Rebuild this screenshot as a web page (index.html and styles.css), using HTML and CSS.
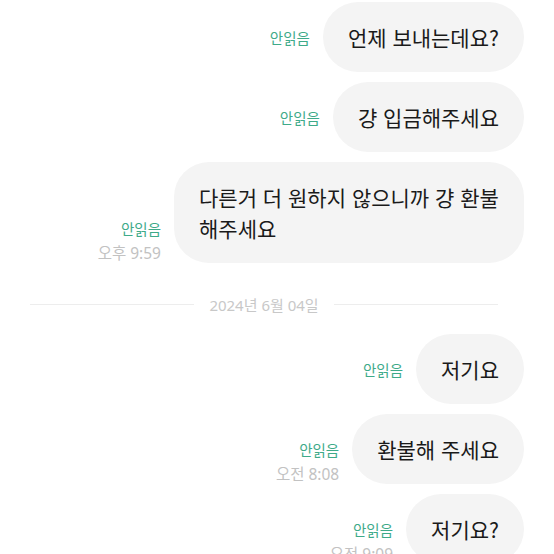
FILE: index.html
```html
<!DOCTYPE html>
<html lang="ko">
<head>
    <meta charset="utf-8">
    <title>채팅</title>
    <link rel="stylesheet" href="styles.css">
</head>
<body>

    <!-- Chat messages -->
    <div class="chat">
        <div class="row">
            <div class="meta">
                <span class="unread">안읽음</span>
                <span class="time hidden">오후 9:59</span>
            </div>
            <div class="bubble">언제 보내는데요?</div>
        </div>

        <div class="row">
            <div class="meta">
                <span class="unread">안읽음</span>
                <span class="time hidden">오후 9:59</span>
            </div>
            <div class="bubble">걍 입금해주세요</div>
        </div>

        <div class="row">
            <div class="meta">
                <span class="unread">안읽음</span>
                <span class="time">오후 9:59</span>
            </div>
            <div class="bubble">다른거 더 원하지 않으니까 걍 환불 해주세요</div>
        </div>

        <!-- Date divider -->
        <div class="divider">
            <span class="line"></span>
            <span class="date">2024년 6월 04일</span>
            <span class="line"></span>
        </div>

        <div class="row">
            <div class="meta">
                <span class="unread">안읽음</span>
                <span class="time hidden">오전 8:08</span>
            </div>
            <div class="bubble">저기요</div>
        </div>

        <div class="row">
            <div class="meta">
                <span class="unread">안읽음</span>
                <span class="time">오전 8:08</span>
            </div>
            <div class="bubble">환불해 주세요</div>
        </div>

        <div class="row">
            <div class="meta">
                <span class="unread">안읽음</span>
                <span class="time">오전 9:09</span>
            </div>
            <div class="bubble">저기요?</div>
        </div>
    </div>

</body>
</html>
```

FILE: styles.css
```css
body {
    margin: 0;
    background-color: #fff;
    font-family: "Noto Sans", "Noto Sans CJK KR", sans-serif;
    overflow: hidden;
}

.chat {
    padding-top: 2px;
}

.row {
    display: flex;
    justify-content: flex-end;
    align-items: flex-end;
    gap: 13px;
    padding-right: 30px;
    margin-bottom: 10px;
}

.meta {
    display: flex;
    flex-direction: column;
    align-items: flex-end;
    line-height: 24px;
    margin-bottom: -2px;
    white-space: nowrap;
}

.unread {
    color: #3eaa89;
    font-size: 14.5px;
}

.time {
    color: #c2c2c2;
    font-size: 15.5px;
}

.time.hidden {
    visibility: hidden;
}

.bubble {
    background-color: #f4f4f4;
    color: #1a1a1a;
    font-family: "Noto Sans CJK KR", sans-serif;
    font-size: 21px;
    line-height: 31px;
    padding: 19.5px 25px;
    border-radius: 35px;
    max-width: 300px;
    word-break: keep-all;
}

.divider {
    display: flex;
    align-items: center;
    gap: 15px;
    margin: 31px 56px 20px 30px;
    height: 20px;
}

.divider .line {
    flex: 1;
    height: 1px;
    background-color: #ededed;
}

.divider .date {
    font-family: "Noto Sans", "Noto Sans CJK KR", sans-serif;
    font-size: 15px;
    color: #c8c8c8;
}
```
